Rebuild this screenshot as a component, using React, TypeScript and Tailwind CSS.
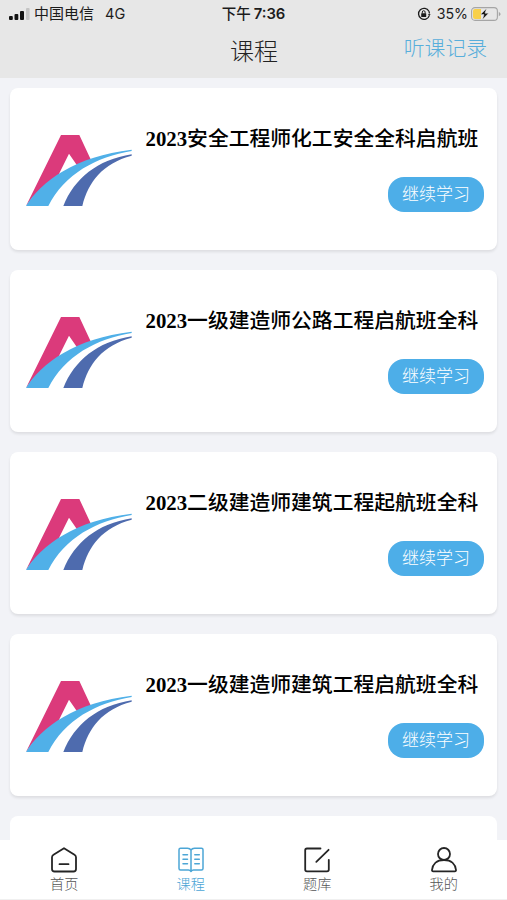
import type { ReactNode } from 'react'

const courses = [
  { year: '2023', name: '安全工程师化工安全全科启航班' },
  { year: '2023', name: '一级建造师公路工程启航班全科' },
  { year: '2023', name: '二级建造师建筑工程起航班全科' },
  { year: '2023', name: '一级建造师建筑工程启航班全科' },
]

function Logo() {
  return (
    <svg viewBox="50 42 324 222" className="w-[108px] h-[74px] shrink-0">
      <path d="M50 258 L155 45 H210 L246 122 L206 140 L179 101 L144 172 Q90 200 50 258Z" fill="#db3a7b" />
      <path d="M50 258 C95 183 200 108 367 89 V93 C262 110 165 162 117 258Z" fill="#50b0e8" />
      <path d="M162 258 C195 176 264 119 367 103 V107 C280 130 237 185 219 258Z" fill="#4e6bae" />
    </svg>
  )
}

function StatusBar() {
  return (
    <div className="h-7 flex items-center justify-between pl-[9px] pr-[6px] text-[14.5px] text-[#1c1c1c]">
      <div className="w-[200px] flex items-center">
        <svg width="21" height="12" viewBox="0 0 21 12" className="mr-[4px]">
          <rect x="0" y="8" width="3.8" height="4" rx="1" fill="#111" />
          <rect x="5.5" y="6" width="3.8" height="6" rx="1" fill="#111" />
          <rect x="11" y="3" width="4" height="9" rx="1" fill="#111" />
          <rect x="17" y="0" width="3.6" height="12" rx="1" fill="#c4c4c4" />
        </svg>
        <span className="text-[15px]">中国电信</span>
        <span className="ml-[11px]">4G</span>
      </div>
      <div className="flex items-center whitespace-nowrap font-medium -ml-[3px]">
        <span>下午</span>
        <span className="ml-[3px] font-semibold text-[14.8px]">7:36</span>
      </div>
      <div className="w-[200px] flex items-center justify-end">
        <svg width="14" height="14" viewBox="0 0 14 14" className="mr-[6px]" fill="none" stroke="#1c1c1c">
          <path d="M11.9 4.2A5.5 5.5 0 1 0 12.3 8.6" strokeWidth="1.3" />
          <path d="M10.8 7.2 L12.4 9 L13.6 7Z" fill="#1c1c1c" stroke="none" />
          <path d="M11.9 4.2 L12.5 6.5" strokeWidth="1.2" />
          <rect x="4.2" y="6.2" width="5" height="3.8" rx="0.5" fill="#1c1c1c" stroke="none" />
          <path d="M5.3 6.5 V5.1 A1.4 1.4 0 0 1 8.1 5.1 V6.5" />
        </svg>
        <span className="text-[14.2px]">35%</span>
        <svg width="30" height="14" viewBox="0 0 30 14" className="ml-[3px]">
          <rect x="0.6" y="0.6" width="25.8" height="12.8" rx="3.4" fill="none" stroke="#a5a5a5" strokeWidth="1.1" />
          <path d="M4 2 H10 V12 H4 Q2 12 2 10 V4 Q2 2 4 2Z" fill="#f8d04a" />
          <path d="M27.8 4.7 Q31.4 7 27.8 9.3Z" fill="#a5a5a5" />
          <path d="M15.5 1.5 L9.5 7.6 H13 L11.5 12.5 L17.5 6.2 H14Z" fill="#111" stroke="#e7e7e7" strokeWidth="0.5" />
        </svg>
      </div>
    </div>
  )
}

function CourseCard({ year, name }: { year: string; name: string }) {
  return (
    <div className="h-[162px] shrink-0 bg-white rounded-lg shadow-[0_2px_3px_rgba(0,0,0,0.09)] flex pl-4 pr-[13px]">
      <div className="pt-[46px]">
        <Logo />
      </div>
      <div className="flex-1 flex flex-col items-end pt-[37px]">
        <h2 className="w-full pl-[11.5px] text-[20.8px] leading-7 font-medium text-black whitespace-nowrap">
          <span className="font-bold font-['Liberation_Serif',serif]">{year}</span>
          {name}
        </h2>
        <button className="mt-6 w-24 h-[35px] rounded-[16px] bg-[#4daee8] text-white text-[17px] font-light">
          继续学习
        </button>
      </div>
    </div>
  )
}

function Tab({ label, active, children }: { label: string; active?: boolean; children: ReactNode }) {
  return (
    <div className={active ? 'flex-1 flex flex-col items-center text-[#4ca6d6]' : 'flex-1 flex flex-col items-center text-[#252525]'}>
      <svg width="28" height="28" viewBox="0 0 28 28" fill="none" stroke="currentColor" strokeWidth="1.8" strokeLinejoin="round" strokeLinecap="round">
        {children}
      </svg>
      <span className={active ? 'text-[14.2px] leading-5 font-light' : 'text-[14.2px] leading-5 font-light text-[#555]'}>{label}</span>
    </div>
  )
}

export default function App() {
  return (
    <div className="w-[507px] h-[900px] overflow-hidden flex flex-col bg-[#f2f3f7] font-['Inter','Noto_Sans_CJK_SC',sans-serif]">
      <header className="h-[78px] shrink-0 bg-[#e7e7e7]">
        <StatusBar />
        <div className="grid grid-cols-3 items-center pr-5 pl-[21px]">
          <h1 className="col-start-2 text-center text-[24px] leading-[46px] pt-px font-light text-[#222]">课程</h1>
          <a className="text-right text-[20.8px] leading-[40px] pb-[5px] font-light text-[#58aedb]">听课记录</a>
        </div>
      </header>

      <main className="flex-1 min-h-0 overflow-hidden flex flex-col gap-5 px-[10px] pt-[10px]">
        {courses.map((course) => (
          <CourseCard key={course.name} year={course.year} name={course.name} />
        ))}
        <div className="h-[162px] shrink-0 bg-white rounded-lg" />
      </main>

      <nav className="h-[60px] shrink-0 bg-white flex pt-[6px] pl-px border-b border-[#f0f0f0]">
        <Tab label="首页">
          <path d="M14 2.2 L24.5 8.8 Q26 9.8 26 11.3 V23 Q26 25.5 23.5 25.5 H4.5 Q2 25.5 2 23 V11.3 Q2 9.8 3.5 8.8Z" />
          <path d="M9.5 18.2 H18.5" />
        </Tab>
        <Tab label="课程" active>
          <path d="M14 4.2 Q13 2.2 10.5 2.2 H3.5 Q2 2.2 2 3.7 V22.5 Q2 24 3.5 24 H11.5 Q13 24 14 25.5 Q15 24 16.5 24 H24.5 Q26 24 26 22.5 V3.7 Q26 2.2 24.5 2.2 H17.5 Q15 2.2 14 4.2Z M14 4.2 V25" strokeWidth="1.5" />
          <path d="M6 8.8 H10.5 M6 13.2 H10.5 M6 17.7 H10.5 M17.8 8.8 H22.3 M17.8 13.2 H22.3 M17.8 17.7 H22.3" strokeWidth="1.5" />
        </Tab>
        <Tab label="题库">
          <path d="M17.5 2.5 H4 Q2.2 2.5 2.2 4.3 V23.5 Q2.2 25.3 4 25.3 H24 Q25.8 25.3 25.8 23.5 V13.8" />
          <path d="M13.3 15.8 L25.6 3.8" />
        </Tab>
        <Tab label="我的">
          <circle cx="14" cy="8" r="6" />
          <path d="M14 14 C6.5 14 2.5 18.5 2 24 Q1.9 25.3 3.2 25.3 H24.8 Q26.1 25.3 26 24 C25.5 18.5 21.5 14 14 14Z" />
        </Tab>
      </nav>
    </div>
  )
}
